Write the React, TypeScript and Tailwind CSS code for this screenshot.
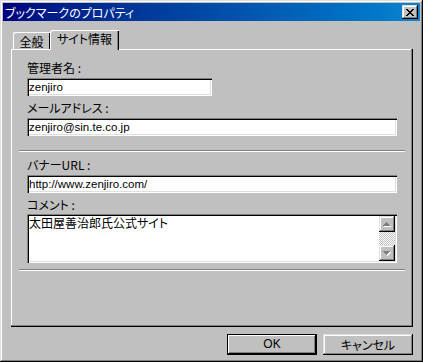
import React from "react";

const jp = "font-['Noto_Sans_CJK_JP',sans-serif] [font-feature-settings:'palt']";
const field =
  "bg-white shadow-[inset_1px_1px_#808080,inset_2px_2px_#000000,inset_-1px_-1px_#ffffff,inset_-2px_-2px_#dfdfdf]";
const raised =
  "bg-[#c0c0c0] shadow-[inset_-1px_-1px_#000000,inset_1px_1px_#dfdfdf,inset_-2px_-2px_#808080,inset_2px_2px_#ffffff]";

function Label({ children, className = "" }: { children: React.ReactNode; className?: string }) {
  return (
    <div className={`text-[12px] leading-[13px] text-black ${jp} ${className}`}>{children}</div>
  );
}

function Field({ value, className = "" }: { value: string; className?: string }) {
  return (
    <div
      className={`h-[18px] ${field} pl-[2px] pt-[2px] text-[11.5px] leading-[14px] text-black font-['Liberation_Sans','Noto_Sans_CJK_JP',sans-serif] whitespace-nowrap overflow-hidden ${className}`}
    >
      {value}
    </div>
  );
}

function Separator({ className = "" }: { className?: string }) {
  return (
    <div className={`-mx-[8px] h-[2px] border-t border-t-[#808080] border-b border-b-white ${className}`} />
  );
}

function UpArrow() {
  const rows = [
    [7, 7],
    [6, 8],
    [5, 9],
    [4, 10],
  ];
  return (
    <svg width="16" height="16" viewBox="0 0 16 16" shapeRendering="crispEdges">
      {rows.map(([a, b], i) => (
        <rect key={"w" + i} x={a + 1} y={6 + i + 1} width={b - a + 1} height={1} fill="#ffffff" />
      ))}
      {rows.map(([a, b], i) => (
        <rect key={"g" + i} x={a} y={6 + i} width={b - a + 1} height={1} fill="#808080" />
      ))}
    </svg>
  );
}

function DownArrow() {
  const rows = [
    [4, 10],
    [5, 9],
    [6, 8],
    [7, 7],
  ];
  return (
    <svg width="16" height="16" viewBox="0 0 16 16" shapeRendering="crispEdges">
      {rows.map(([a, b], i) => (
        <rect key={"w" + i} x={a + 1} y={6 + i + 1} width={b - a + 1} height={1} fill="#ffffff" />
      ))}
      {rows.map(([a, b], i) => (
        <rect key={"g" + i} x={a} y={6 + i} width={b - a + 1} height={1} fill="#808080" />
      ))}
    </svg>
  );
}

function CloseGlyph() {
  const rows: [number, number][][] = [
    [[0, 2], [6, 2]],
    [[1, 2], [5, 2]],
    [[2, 4]],
    [[3, 2]],
    [[2, 4]],
    [[1, 2], [5, 2]],
    [[0, 2], [6, 2]],
  ];
  return (
    <svg width="8" height="7" viewBox="0 0 8 7" shapeRendering="crispEdges">
      {rows.map((segs, y) =>
        segs.map(([x, w], j) => <rect key={`${y}-${j}`} x={x} y={y} width={w} height={1} fill="#000" />)
      )}
    </svg>
  );
}

export default function App() {
  return (
    <div
      className={`w-[423px] h-[362px] bg-[#c0c0c0] p-[3px] flex flex-col shadow-[inset_-1px_-1px_#000000,inset_1px_1px_#dfdfdf,inset_-2px_-2px_#808080,inset_2px_2px_#ffffff] ${jp}`}
    >
      {/* Title bar */}
      <div className="h-[18px] flex items-center justify-between bg-gradient-to-r from-[#000080] to-[#1084d0] pl-[2px] pr-[2px]">
        <span className={`text-white text-[12px] leading-[13px] ${jp}`}>ブックマークのプロパティ</span>
        <div className={`w-[16px] h-[14px] ${raised} flex items-center justify-center`}>
          <CloseGlyph />
        </div>
      </div>

      {/* Body */}
      <div className="flex flex-col pl-[8px] pr-[7px] pt-[9px]">
        {/* Tabs */}
        <div className="flex items-end h-[19px] pl-[2px]">
          <div className="w-[37px] h-[17px] bg-[#c0c0c0] shadow-[inset_1px_1px_#ffffff,inset_-1px_0_#000000] flex justify-center pt-[3px] rounded-tl-[2px]">
            <span className={`text-[12px] leading-[13px] text-black ${jp}`}>全般</span>
          </div>
          <div className="relative z-10 -mb-px w-[69px] h-[20px] bg-[#c0c0c0] shadow-[inset_1px_1px_#ffffff,inset_-1px_0_#000000,inset_-2px_0_#808080] flex justify-center pt-[2px] rounded-tl-[2px]">
            <span className={`text-[12px] leading-[13px] text-black ${jp}`}>サイト情報</span>
          </div>
        </div>

        {/* Panel */}
        <div className="w-[402px] h-[278px] bg-[#c0c0c0] shadow-[inset_-1px_-1px_#000000,inset_-2px_-2px_#808080,inset_1px_1px_#ffffff] px-[16px] pt-[12px] flex flex-col">
          <Label>管理者名 :</Label>
          <Field value="zenjiro" className="mt-[4px] w-[185px]" />
          <Label className="mt-[5px]">メールアドレス :</Label>
          <Field value="zenjiro@sin.te.co.jp" className="mt-[4px] w-full" />
          <Separator className="mt-[14px]" />
          <Label className="mt-[6px]">バナーURL :</Label>
          <Field value="http://www.zenjiro.com/" className="mt-[4px] w-full" />
          <Label className="mt-[5px]">コメント :</Label>
          <div className={`mt-[3px] h-[49px] w-full ${field} p-[2px] flex`}>
            <div className={`flex-1 text-[12px] leading-[13px] text-black ${jp}`}>太田屋善治郎氏公式サイト</div>
            <div className="w-[16px] flex flex-col">
              <div className={`h-[16px] ${raised}`}>
                <UpArrow />
              </div>
              <div className="flex-1 bg-[image:repeating-conic-gradient(#c0c0c0_0%_25%,#ffffff_0%_50%)] bg-[length:2px_2px]" />
              <div className={`h-[16px] ${raised}`}>
                <DownArrow />
              </div>
            </div>
          </div>
          <Separator className="mt-[6px]" />
        </div>

        {/* Buttons */}
        <div className="flex justify-end gap-[6px] mt-[7px]">
          <div className="w-[90px] h-[21px] border border-black bg-[#c0c0c0] shadow-[inset_-1px_-1px_#000000,inset_1px_1px_#ffffff,inset_-2px_-2px_#808080] flex items-center justify-center">
            <span className="text-[12px] leading-[13px] text-black font-['Liberation_Sans',sans-serif]">OK</span>
          </div>
          <div className={`w-[90px] h-[21px] ${raised} flex items-center justify-center`}>
            <span className={`text-[12px] leading-[13px] text-black ${jp}`}>キャンセル</span>
          </div>
        </div>
      </div>
    </div>
  );
}
